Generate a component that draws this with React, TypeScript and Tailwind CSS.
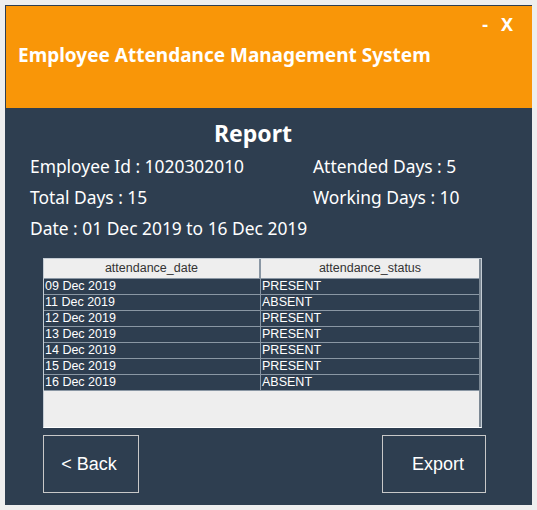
const rows = [
  ['09 Dec 2019', 'PRESENT'],
  ['11 Dec 2019', 'ABSENT'],
  ['12 Dec 2019', 'PRESENT'],
  ['13 Dec 2019', 'PRESENT'],
  ['14 Dec 2019', 'PRESENT'],
  ['15 Dec 2019', 'PRESENT'],
  ['16 Dec 2019', 'ABSENT'],
];

export default function App() {
  return (
    <div className="w-[537px] h-[510px] bg-[#eeeeee] pt-[5px] pl-[5px] font-['Noto_Sans',sans-serif]">
      <div className="w-[527px] h-[500px] border-t border-l border-[#2e3e50] bg-[#2e3e50] flex flex-col">
        {/* header */}
        <div className="h-[102px] bg-[#f99608] relative text-white">
          <div className="absolute right-[19px] top-[5px] flex gap-[13px] text-[18px] font-bold">
            <span>-</span>
            <span>X</span>
          </div>
          <h1 className="pl-[12px] pt-[35px] text-[19px] font-bold leading-[28px]">
            Employee Attendance Management System
          </h1>
        </div>

        {/* body */}
        <div className="flex-1 text-white">
          <div className="pl-[208px] pt-[10px] text-[23px] font-bold leading-[30px]">Report</div>
          <div className="grid grid-cols-[283px_1fr] pl-[24px] text-[17.4px] leading-[31px] mt-[3px]">
            <span>Employee Id : 1020302010</span>
            <span>Attended Days : 5</span>
            <span>Total Days : 15</span>
            <span>Working Days : 10</span>
            <span className="col-span-2">Date : 01 Dec 2019 to 16 Dec 2019</span>
          </div>

          <div className="ml-[37px] mt-[14px] w-[439px] h-[170px] flex border border-[#c4ccd4] border-b-white">
            <div className="flex-1 flex flex-col bg-[#eeeeee] font-['Liberation_Sans',sans-serif] text-[12.5px]">
              <div className="flex h-[20px] bg-[#eeeeee] text-[#333333] border-b border-[#8a97a4]">
                <div className="w-[217px] flex items-center justify-center border-r-2 border-[#8a97a4]">attendance_date</div>
                <div className="flex-1 flex items-center justify-center">attendance_status</div>
              </div>
              {rows.map(([d, s]) => (
                <div key={d} className="flex h-[16px] bg-[#2e3e50] text-white border-b border-[#8a97a4] leading-[15px]">
                  <div className="w-[217px] pl-[1px] border-r border-[#8a97a4]">{d}</div>
                  <div className="flex-1 pl-[1px]">{s}</div>
                </div>
              ))}
            </div>
            <div className="w-[2px] bg-[#7c8894]" />
          </div>

          <div className="flex justify-between ml-[37px] mr-[46px] mt-[7px]">
            <button className="w-[96px] h-[58px] border border-[#c8c8c8] text-[18px] pr-[4px] font-['Liberation_Sans',sans-serif] text-white">
              &lt; Back
            </button>
            <button className="w-[104px] h-[58px] border border-[#c8c8c8] text-[18px] pl-[8px] font-['Liberation_Sans',sans-serif] text-white">
              Export
            </button>
          </div>
        </div>
      </div>
    </div>
  );
}
